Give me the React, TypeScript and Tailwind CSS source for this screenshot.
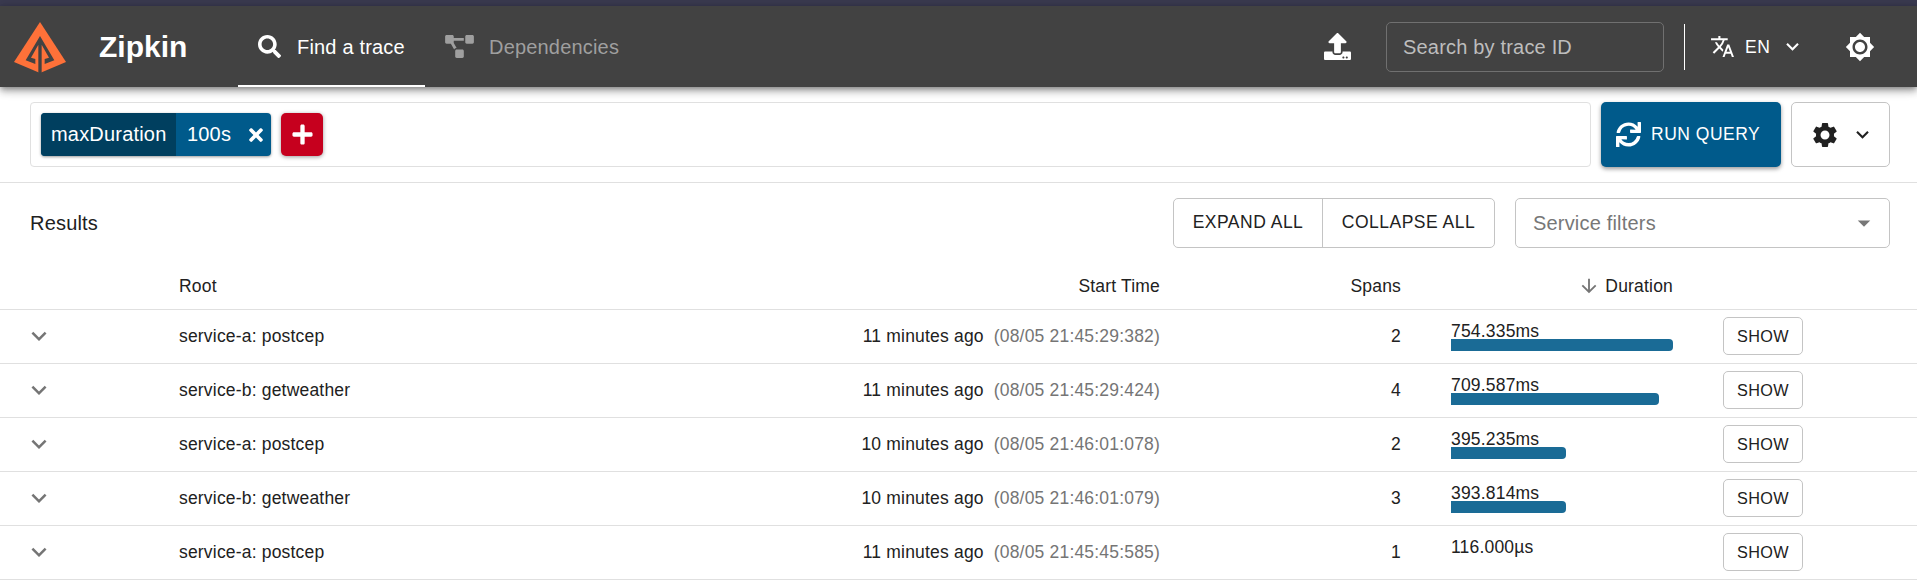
import React from 'react';
import { FaSearch, FaProjectDiagram, FaUpload, FaTimes, FaPlus, FaSync } from 'react-icons/fa';
import { MdTranslate, MdExpandMore, MdBrightnessHigh, MdSettings, MdArrowDropDown, MdArrowDownward } from 'react-icons/md';

interface Trace {
  root: string;
  ago: string;
  time: string;
  spans: number;
  duration: string;
  width: number;
}

const traces: Trace[] = [
  { root: 'service-a: postcep', ago: '11 minutes ago', time: '(08/05 21:45:29:382)', spans: 2, duration: '754.335ms', width: 222 },
  { root: 'service-b: getweather', ago: '11 minutes ago', time: '(08/05 21:45:29:424)', spans: 4, duration: '709.587ms', width: 208 },
  { root: 'service-a: postcep', ago: '10 minutes ago', time: '(08/05 21:46:01:078)', spans: 2, duration: '395.235ms', width: 115 },
  { root: 'service-b: getweather', ago: '10 minutes ago', time: '(08/05 21:46:01:079)', spans: 3, duration: '393.814ms', width: 115 },
  { root: 'service-a: postcep', ago: '11 minutes ago', time: '(08/05 21:45:45:585)', spans: 1, duration: '116.000µs', width: 0 },
];

function Logo() {
  return (
    <svg viewBox="0 0 156 153" className="mt-[2px] h-[51px] w-[52px] shrink-0">
      <path fill="#fe7139" d="M78 0 156 120 78 153 0 120Z" />
      <path fill="#424242" d="M78 42 121 115 92 126V111L105 107 83 68V153H73V68L51 107 64 111V126L35 115Z" />
    </svg>
  );
}

function Header() {
  return (
    <header className="relative z-10 flex h-[81px] items-center bg-[#424242] text-white shadow-[0_2px_5px_-1px_rgba(0,0,0,0.3),0_5px_7px_rgba(0,0,0,0.2),0_1px_12px_rgba(0,0,0,0.18)]">
      <div className="flex w-[238px] items-center pl-[14px]">
        <Logo />
        <h1 className="ml-[33px] text-[30px] leading-none font-bold">Zipkin</h1>
      </div>
      <nav className="flex h-full grow text-[20px] tracking-[0.00938em]">
        <a className="flex h-full w-[187px] items-center border-b-2 border-white pt-[2px] pl-5">
          <FaSearch className="size-[23px]" />
          <span className="ml-4">Find a trace</span>
        </a>
        <a className="flex h-full items-center pl-5 text-[#9f9f9f]">
          <FaProjectDiagram className="h-[23px] w-[29px]" />
          <span className="ml-[15px]">Dependencies</span>
        </a>
      </nav>
      <FaUpload className="size-[27px]" />
      <div className="ml-[35px] flex h-[50px] w-[278px] items-center rounded-[5px] border border-[#707070] pl-[16px] text-[20px] tracking-[0.00938em] text-[#bdbdbd]">
        Search by trace ID
      </div>
      <div className="ml-5 h-[46px] w-px bg-white" />
      <div className="flex w-[160px] items-center pl-[25px]">
        <MdTranslate className="size-[25px]" />
        <span className="ml-[10px] pt-px text-[17.5px] tracking-[0.02857em]">EN</span>
        <MdExpandMore className="ml-[10px] size-[25px]" />
      </div>
      <MdBrightnessHigh className="mr-[42px] size-[30px]" />
    </header>
  );
}

function QueryBar() {
  return (
    <section className="flex h-[96px] items-start border-b border-[#e0e0e0] pt-[15px] pr-[27px] pl-[30px] text-[20px]">
      <div className="flex h-[65px] w-[1561px] items-center rounded-[4px] border border-[#e0e0e0] pl-[10px]">
        <div className="flex h-[43px] w-[230px] overflow-hidden rounded-[4px] bg-[#005a8b] tracking-[0.00938em] text-white shadow-[0_1px_3px_rgba(0,0,0,0.4)]">
          <span className="flex w-[135px] items-center bg-[#003f5f] pb-[2px] pl-[10px]">maxDuration</span>
          <span className="flex w-[65px] items-center pb-[2px] pl-[11px]">100s</span>
          <span className="flex grow items-center pl-[5px]">
            <FaTimes className="size-[20px]" />
          </span>
        </div>
        <button className="ml-[10px] flex h-[43px] w-[42px] items-center justify-center rounded-[5px] bg-[#c6001e] text-white shadow-[0_1px_4px_rgba(0,0,0,0.4)]">
          <FaPlus className="size-[23px]" />
        </button>
      </div>
      <button className="ml-[10px] flex h-[65px] w-[180px] items-center rounded-[5px] bg-[#005a8b] pl-[15px] text-white shadow-[0_2px_4px_rgba(0,0,0,0.4)]">
        <FaSync className="size-[25px]" />
        <span className="ml-[10px] text-[17.5px] tracking-[0.02857em]">RUN QUERY</span>
      </button>
      <button className="ml-[10px] flex h-[65px] w-[99px] items-center rounded-[5px] border border-[#c4c4c4] pl-[18px] text-[#212121]">
        <MdSettings className="size-[30px]" />
        <MdExpandMore className="ml-[10px] size-[25px]" />
      </button>
    </section>
  );
}

function ResultsBar() {
  return (
    <section className="flex h-[65px] items-end pr-[27px] pl-[30px]">
      <h2 className="flex h-[50px] grow items-center text-[20px] tracking-[0.00938em]">Results</h2>
      <div className="flex h-[50px] w-[322px] rounded-[5px] border border-[#c4c4c4] text-[17.5px] tracking-[0.02857em]">
        <button className="flex w-[149px] items-center justify-center border-r border-[#c4c4c4] pb-px">EXPAND ALL</button>
        <button className="flex grow items-center justify-center pb-px">COLLAPSE ALL</button>
      </div>
      <div className="ml-5 flex h-[50px] w-[375px] items-center rounded-[5px] border border-[#c4c4c4] pr-[10px] pl-[17px] text-[20px] tracking-[0.00938em] text-[#777]">
        <span className="grow">Service filters</span>
        <MdArrowDropDown className="size-[30px]" />
      </div>
    </section>
  );
}

const columns = 'grid grid-cols-[179px_981px_241px_50px_222px_50px_80px] items-center border-b border-[#e0e0e0]';

function TraceRow({ trace }: { trace: Trace }) {
  return (
    <div className={`${columns} h-[54px] pb-px`}>
      <MdExpandMore className="ml-6 size-[30px] text-[#757575]" />
      <div className="flex justify-between">
        <span>{trace.root}</span>
        <span>
          {trace.ago}
          <span className="ml-[10px] text-[#757575]">{trace.time}</span>
        </span>
      </div>
      <span className="text-right">{trace.spans}</span>
      <span />
      <div className="mb-[2px] flex h-[32px] flex-col">
        <span className="h-[20px] leading-[24px]">{trace.duration}</span>
        <div className="h-[12px] rounded-r-[4px] bg-[#1a6b96]" style={{ width: trace.width }} />
      </div>
      <span />
      <button className="h-[38px] rounded-[5px] border border-[#c4c4c4] text-[16.25px] tracking-[0.02em]">SHOW</button>
    </div>
  );
}

export default function App() {
  return (
    <div className="h-[581px] overflow-hidden bg-white font-['Liberation_Sans',Arial,sans-serif] text-[#212121]">
      <div className="h-[6px] bg-[#3a3a50]" />
      <Header />
      <QueryBar />
      <ResultsBar />
      <div className="text-[17.5px] tracking-[0.01071em]">
        <div className={`${columns} h-[62px] pt-[15px]`}>
          <span />
          <div className="flex justify-between">
            <span>Root</span>
            <span>Start Time</span>
          </div>
          <span className="text-right">Spans</span>
          <span />
          <span className="flex items-center justify-end">
            <MdArrowDownward className="mr-[5px] size-[22px] text-[#757575]" />
            Duration
          </span>
        </div>
        {traces.map((trace) => (
          <TraceRow key={trace.time} trace={trace} />
        ))}
      </div>
    </div>
  );
}
